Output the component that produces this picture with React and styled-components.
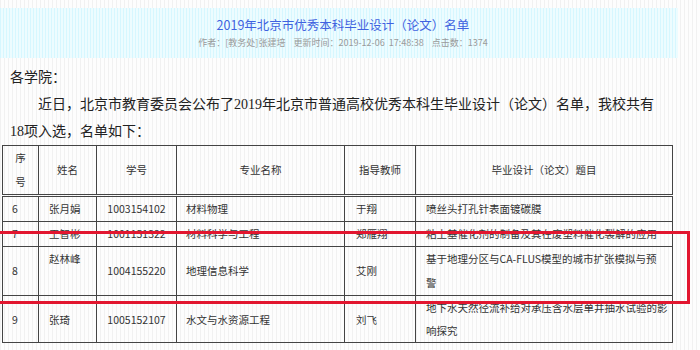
import styled, { createGlobalStyle } from 'styled-components';

const GlobalStyle = createGlobalStyle`
  html, body {
    margin: 0;
    padding: 0;
  }
  body {
    background: repeating-linear-gradient(90deg, #f1f1f1 0 1px, #fdfdfd 1px 4px);
    font-family: "Noto Sans CJK SC", sans-serif;
    color: #333;
  }
`;

const Page = styled.div`
  position: relative;
  width: 700px;
  height: 350px;
  overflow: hidden;
`;

const Banner = styled.header`
  margin-top: 8px;
  width: 678px;
  height: 50px;
  background: repeating-linear-gradient(90deg, #d6f7ff 0 1px, #edfcff 1px 3px);
  display: flex;
  flex-direction: column;
  align-items: center;
  justify-content: center;
  gap: 4px;
  padding-left: 8px;
  box-sizing: border-box;
`;

const Title = styled.h1`
  margin: 0;
  font-size: 12.5px;
  font-weight: normal;
  line-height: 16px;
  color: #4062e0;
`;

const Meta = styled.div`
  font-size: 9px;
  line-height: 12px;
  color: #9a9a9a;
  word-spacing: 2px;
`;

const Article = styled.div`
  padding: 6px 0 0 2px;
`;

const Para = styled.p`
  margin: 0;
  padding-left: 8px;
  font-family: "Liberation Serif", "Noto Sans CJK SC", serif;
  font-size: 14px;
  line-height: 27px;
  color: #222;
  text-indent: ${(p) => (p.$indent ? '28px' : '0')};
`;

const Table = styled.table`
  width: 670px;
  border-collapse: collapse;
  table-layout: fixed;
  font-size: 10.5px;
  color: #333;
`;

const Th = styled.th`
  border: 1px solid #444;
  border-bottom: 3px double #444;
  font-weight: normal;
  line-height: 24px;
  padding: 0;
  text-align: center;
`;

const Row = styled.tr`
  line-height: ${(p) => (p.$tight ? 23 : 24)}px;
`;

const Td = styled.td`
  border: 1px solid #444;
  padding: 0 0 0 ${(p) => p.$pad ?? 10}px;
  text-align: ${(p) => (p.$center ? 'center' : 'left')};
  vertical-align: ${(p) => (p.$top ? 'top' : 'middle')};
  white-space: ${(p) => (p.$nowrap ? 'nowrap' : 'normal')};
  overflow: hidden;
`;

const Mark = styled.div`
  position: absolute;
  left: -3px;
  top: 231px;
  width: 693px;
  height: 73px;
  border: 3px solid #e2162f;
  box-sizing: border-box;
  pointer-events: none;
`;

const widths = [36, 58, 80, 168, 71, 257];

const rows = [
  { no: '6', name: '张月娟', id: '1003154102', major: '材料物理', teacher: '于翔', title: ['喷丝头打孔针表面镀碳膜'] },
  { no: '7', name: '王智彬', id: '1001151322', major: '材料科学与工程', teacher: '郑雁翔', title: ['粘土基催化剂的制备及其在废塑料催化裂解的应用'] },
  { no: '8', name: '赵林峰', id: '1004155220', major: '地理信息科学', teacher: '艾刚', title: ['基于地理分区与CA-FLUS模型的城市扩张模拟与预', '警'], top: true },
  { no: '9', name: '张琦', id: '1005152107', major: '水文与水资源工程', teacher: '刘飞', title: ['地下水天然径流补给对承压含水层单井抽水试验的影', '响探究'], tight: true },
];

export default function App() {
  return (
    <>
      <GlobalStyle />
      <Page>
        <Banner>
          <Title>2019年北京市优秀本科毕业设计（论文）名单</Title>
          <Meta>作者：[教务处]张建培&nbsp; 更新时间：2019-12-06 17:48:38&nbsp; 点击数：1374</Meta>
        </Banner>
        <Article>
          <Para>各学院：</Para>
          <Para $indent>
            近日，北京市教育委员会公布了2019年北京市普通高校优秀本科生毕业设计（论文）名单，我校共有
            <br />
            18项入选，名单如下：
          </Para>
          <Table>
            <colgroup>
              {widths.map((w, i) => (
                <col key={i} style={{ width: w }} />
              ))}
            </colgroup>
            <thead>
              <tr>
                <Th>序<br />号</Th>
                <Th>姓名</Th>
                <Th>学号</Th>
                <Th>专业名称</Th>
                <Th>指导教师</Th>
                <Th>毕业设计（论文）题目</Th>
              </tr>
            </thead>
            <tbody>
              {rows.map((r) => (
                <Row key={r.no} $tight={r.tight}>
                  <Td $pad={9}>{r.no}</Td>
                  <Td $top={r.top}>{r.name}</Td>
                  <Td $pad={0} $center>{r.id}</Td>
                  <Td $pad={9}>{r.major}</Td>
                  <Td $pad={11}>{r.teacher}</Td>
                  <Td $nowrap>
                    {r.title.map((t, i) => (
                      <span key={i}>
                        {i > 0 && <br />}
                        {t}
                      </span>
                    ))}
                  </Td>
                </Row>
              ))}
            </tbody>
          </Table>
        </Article>
        <Mark />
      </Page>
    </>
  );
}
